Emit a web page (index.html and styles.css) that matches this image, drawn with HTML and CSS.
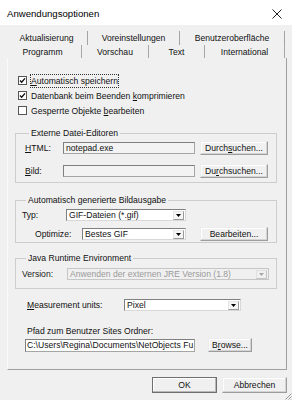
FILE: index.html
```html
<!DOCTYPE html>
<html lang="de">
<head>
    <meta charset="UTF-8">
    <meta name="viewport" content="width=device-width, initial-scale=1.0">
    <title>Anwendungsoptionen</title>
    <link rel="stylesheet" href="styles.css">
</head>
<body>
    <div class="dialog">
        <header class="titlebar">
            <span class="title">Anwendungsoptionen</span>
            <svg class="close" width="10" height="10" viewBox="0 0 10 10">
                <path d="M0.5 0.5 L9.5 9.5 M9.5 0.5 L0.5 9.5" stroke="#222" stroke-width="1" fill="none"/>
            </svg>
        </header>

        <nav class="tabs">
            <div class="tab-row row-back">
                <div class="tab w82">Aktualisierung</div>
                <div class="tab w92">Voreinstellungen</div>
                <div class="tab w105">Benutzeroberfläche</div>
            </div>
            <div class="tab-row row-front">
                <div class="tab active w78">Programm</div>
                <div class="tab w67">Vorschau</div>
                <div class="tab w56">Text</div>
                <div class="tab w80">International</div>
            </div>
        </nav>

        <main class="panel">
            <div class="checks">
                <div class="check">
                    <span class="box">
                        <svg width="7" height="7" viewBox="0 0 7 7"><path d="M1 3.4 L2.7 5.2 L6 1.4" stroke="#111" stroke-width="1.4" fill="none"/></svg>
                    </span>
                    <span class="check-label focused"><u>A</u>utomatisch speichern</span>
                </div>
                <div class="check">
                    <span class="box">
                        <svg width="7" height="7" viewBox="0 0 7 7"><path d="M1 3.4 L2.7 5.2 L6 1.4" stroke="#111" stroke-width="1.4" fill="none"/></svg>
                    </span>
                    <span class="check-label">Datenbank beim Beenden <u>k</u>omprimieren</span>
                </div>
                <div class="check">
                    <span class="box"></span>
                    <span class="check-label">Gesperrte Objekte <u>b</u>earbeiten</span>
                </div>
            </div>

            <fieldset class="group group-editors">
                <legend>Externe Datei-Editoren</legend>
                <div class="row row-first">
                    <span class="label lw38"><u>H</u>TML:</span>
                    <span class="field w132">notepad.exe</span>
                    <button class="btn w68"><span>Durch<u>s</u>uchen...</span></button>
                </div>
                <div class="row row-second">
                    <span class="label lw38"><u>B</u>ild:</span>
                    <span class="field w132"></span>
                    <button class="btn w68"><span>Du<u>r</u>chsuchen...</span></button>
                </div>
            </fieldset>

            <fieldset class="group group-images">
                <legend>Automatisch generierte Bildausgabe</legend>
                <div class="row row-typ">
                    <span class="label lw44">Typ:</span>
                    <div class="combo w120">
                        <span class="value">GIF-Dateien (*.gif)</span>
                        <span class="arrow"></span>
                    </div>
                </div>
                <div class="row row-optimize">
                    <span class="label lw47">Optimize:</span>
                    <div class="combo w104">
                        <span class="value">Bestes GIF</span>
                        <span class="arrow"></span>
                    </div>
                    <button class="btn w68 ml14">Bearbeiten...</button>
                </div>
            </fieldset>

            <fieldset class="group group-java">
                <legend>Java Runtime Environment</legend>
                <div class="row row-version">
                    <span class="label lw45">Version:</span>
                    <div class="combo disabled w202">
                        <span class="value">Anwenden der externen JRE Version (1.8)</span>
                        <span class="arrow"></span>
                    </div>
                </div>
            </fieldset>

            <div class="row row-units">
                <span class="label lw97"><u>M</u>easurement units:</span>
                <div class="combo w117">
                    <span class="value">Pixel</span>
                    <span class="arrow"></span>
                </div>
            </div>

            <div class="path-label">Pfad zum Benutzer Sites Ordner:</div>
            <div class="row row-path">
                <span class="field white w170">C:\Users\Regina\Documents\NetObjects Fu</span>
                <button class="btn w44 ml13">B<u>r</u>owse...</button>
            </div>
        </main>

        <footer class="footer">
            <button class="btn big default">OK</button>
            <button class="btn big">Abbrechen</button>
        </footer>

        <svg class="grip" width="8" height="8" viewBox="0 0 8 8">
            <path d="M7.5 1.5 L1.5 7.5 M7.5 4.5 L4.5 7.5 M7.5 7 L7 7.5" stroke="#9a9a9a" stroke-width="1" fill="none"/>
        </svg>
    </div>
</body>
</html>
```

FILE: styles.css
```css
/* Reset */
* {
    margin: 0;
    padding: 0;
    box-sizing: border-box;
}

body {
    font-family: "Liberation Sans", Arial, sans-serif;
    font-size: 8.6px;
    line-height: 10px;
    color: #111;
    background: #f0f0f0;
}

u {
    text-decoration: underline;
    text-underline-offset: 1px;
}

.dialog {
    position: relative;
    width: 292px;
    height: 400px;
    overflow: hidden;
}

/* Title bar */
.titlebar {
    height: 25px;
    background: #fff;
    display: flex;
    align-items: center;
    justify-content: space-between;
    padding: 3px 10px 0 7px;
}

.title {
    font-size: 9.6px;
    color: #000;
}

.close {
    display: block;
}

/* Tabs */
.tabs {
    padding-top: 6px;
}

.tab-row {
    display: flex;
    height: 14px;
}

.row-back {
    padding-left: 6px;
}

.row-front {
    padding-left: 4px;
    height: 13px;
}

.tab {
    display: flex;
    align-items: center;
    justify-content: center;
    border-right: 1px solid #a3a3a3;
    color: #111;
}

.row-front .tab {
    border-right-color: #a8a8a8;
}

.w82 { width: 82px; }
.w92 { width: 92px; }
.w105 { width: 105px; }
.w78 { width: 78px; }
.w67 { width: 67px; }
.w56 { width: 56px; }
.w80 { width: 80px; }

/* Panel */
.panel {
    margin-left: 7px;
    width: 280px;
    height: 312px;
    border-left: 1px solid #fafafa;
    border-right: 1px solid #a0a0a0;
    border-bottom: 1px solid #a0a0a0;
    padding-top: 15px;
}

/* Checkboxes */
.check {
    display: flex;
    align-items: center;
    height: 15px;
    padding-left: 10px;
}

.box {
    width: 9px;
    height: 9px;
    border: 1px solid #555;
    background: #fff;
    margin-right: 3px;
    display: flex;
    align-items: center;
    justify-content: center;
}

.box svg {
    display: block;
}

.check-label {
    border: 1px solid transparent;
    padding: 1px 0;
}

.check-label.focused {
    border: 1px dotted #333;
}

/* Group boxes */
.group {
    width: 262px;
    margin-left: 7px;
    border: 1px solid #cdcdcd;
    padding: 0;
}

.group legend {
    margin-left: 4px;
    padding: 0 2px;
    line-height: 10px;
}

.group-editors {
    margin-top: 10px;
    padding: 0 0 4px 9px;
}

.group-images {
    margin-top: 12px;
    padding: 0 0 1px 6px;
}

.group-java {
    margin-top: 10px;
    padding: 0 0 8px 6px;
}

.row {
    display: flex;
    align-items: center;
}

.row-first {
    margin-top: 3px;
    height: 14px;
}

.row-second {
    margin-top: 9px;
    height: 14px;
}

.row-typ {
    margin-top: 4px;
    height: 12px;
}

.row-optimize {
    margin-top: 6px;
    height: 14px;
    padding-left: 13px;
}

.row-version {
    margin-top: 5px;
    height: 12px;
    color: #222;
}

.row-units {
    margin-top: 10px;
    height: 12px;
    padding-left: 19px;
}

.path-label {
    margin-top: 15px;
    padding-left: 19px;
    height: 10px;
}

.row-path {
    margin-top: 2px;
    height: 14px;
    padding-left: 17px;
}

.label {
    flex: none;
}

.lw38 { width: 38px; }
.lw44 { width: 44px; }
.lw45 { width: 45px; }
.lw47 { width: 47px; }
.lw97 { width: 97px; }

/* Text fields */
.field {
    height: 12px;
    border: 1px solid #a5a5a5;
    border-top-color: #7f7f7f;
    border-left-color: #7f7f7f;
    background: #f3f3f3;
    padding: 0 2px;
    margin-right: 5px;
    white-space: nowrap;
    overflow: hidden;
    line-height: 10px;
}

.field.white {
    height: 13px;
    background: #fff;
    padding: 0 1px;
    margin-right: 0;
}

.w132 { width: 132px; }
.w170 { width: 170px; }

/* Combo boxes */
.combo {
    height: 12px;
    display: flex;
    align-items: center;
    background: #fff;
    border: 1px solid #d8d8d8;
    border-top-color: #808080;
    border-left-color: #808080;
}

.combo .value {
    flex: 1;
    padding-left: 2px;
    white-space: nowrap;
    overflow: hidden;
}

.combo .arrow {
    width: 11px;
    height: 9px;
    margin-right: 1px;
    border: 1px solid #e6e6e6;
    border-right-color: #9a9a9a;
    border-bottom-color: #9a9a9a;
    background: #f5f5f5 url("data:image/svg+xml,%3Csvg xmlns='http://www.w3.org/2000/svg' width='5' height='3'%3E%3Cpath d='M0 0h5L2.5 3z' fill='%23000'/%3E%3C/svg%3E") no-repeat center;
}

.combo.disabled {
    background: #f0f0f0;
    border-color: #c6c6c6;
    color: #9a9a9a;
}

.combo.disabled .arrow {
    border-color: #e0e0e0 #c4c4c4 #c4c4c4 #e0e0e0;
    background: #f0f0f0 url("data:image/svg+xml,%3Csvg xmlns='http://www.w3.org/2000/svg' width='5' height='3'%3E%3Cpath d='M0 0h5L2.5 3z' fill='%23a8a8a8'/%3E%3C/svg%3E") no-repeat center;
}

.w120 { width: 120px; }
.w104 { width: 104px; }
.w202 { width: 202px; }
.w117 { width: 117px; }

/* Buttons */
.btn {
    font-family: inherit;
    font-size: 8.6px;
    line-height: 10px;
    color: #111;
    height: 14px;
    background: #f0f0f0;
    border: 1px solid #9c9c9c;
    border-top-color: #ececec;
    border-left-color: #ececec;
    box-shadow: inset -1px -1px 0 #d4d4d4, inset 1px 1px 0 #fff;
    display: flex;
    align-items: center;
    justify-content: center;
}

.w68 { width: 68px; }
.w44 { width: 44px; }
.ml14 { margin-left: 14px; }
.ml13 { margin-left: 13px; }

.btn.big {
    width: 65px;
    height: 16px;
}

.btn.default {
    border-color: #6f6f6f;
    box-shadow: inset -1px -1px 0 #b8b8b8, inset 1px 1px 0 #fff;
}

/* Footer */
.footer {
    display: flex;
    justify-content: flex-end;
    gap: 5px;
    padding: 7px 5px 0 0;
}

.grip {
    position: absolute;
    right: 0;
    bottom: 0;
}
```
